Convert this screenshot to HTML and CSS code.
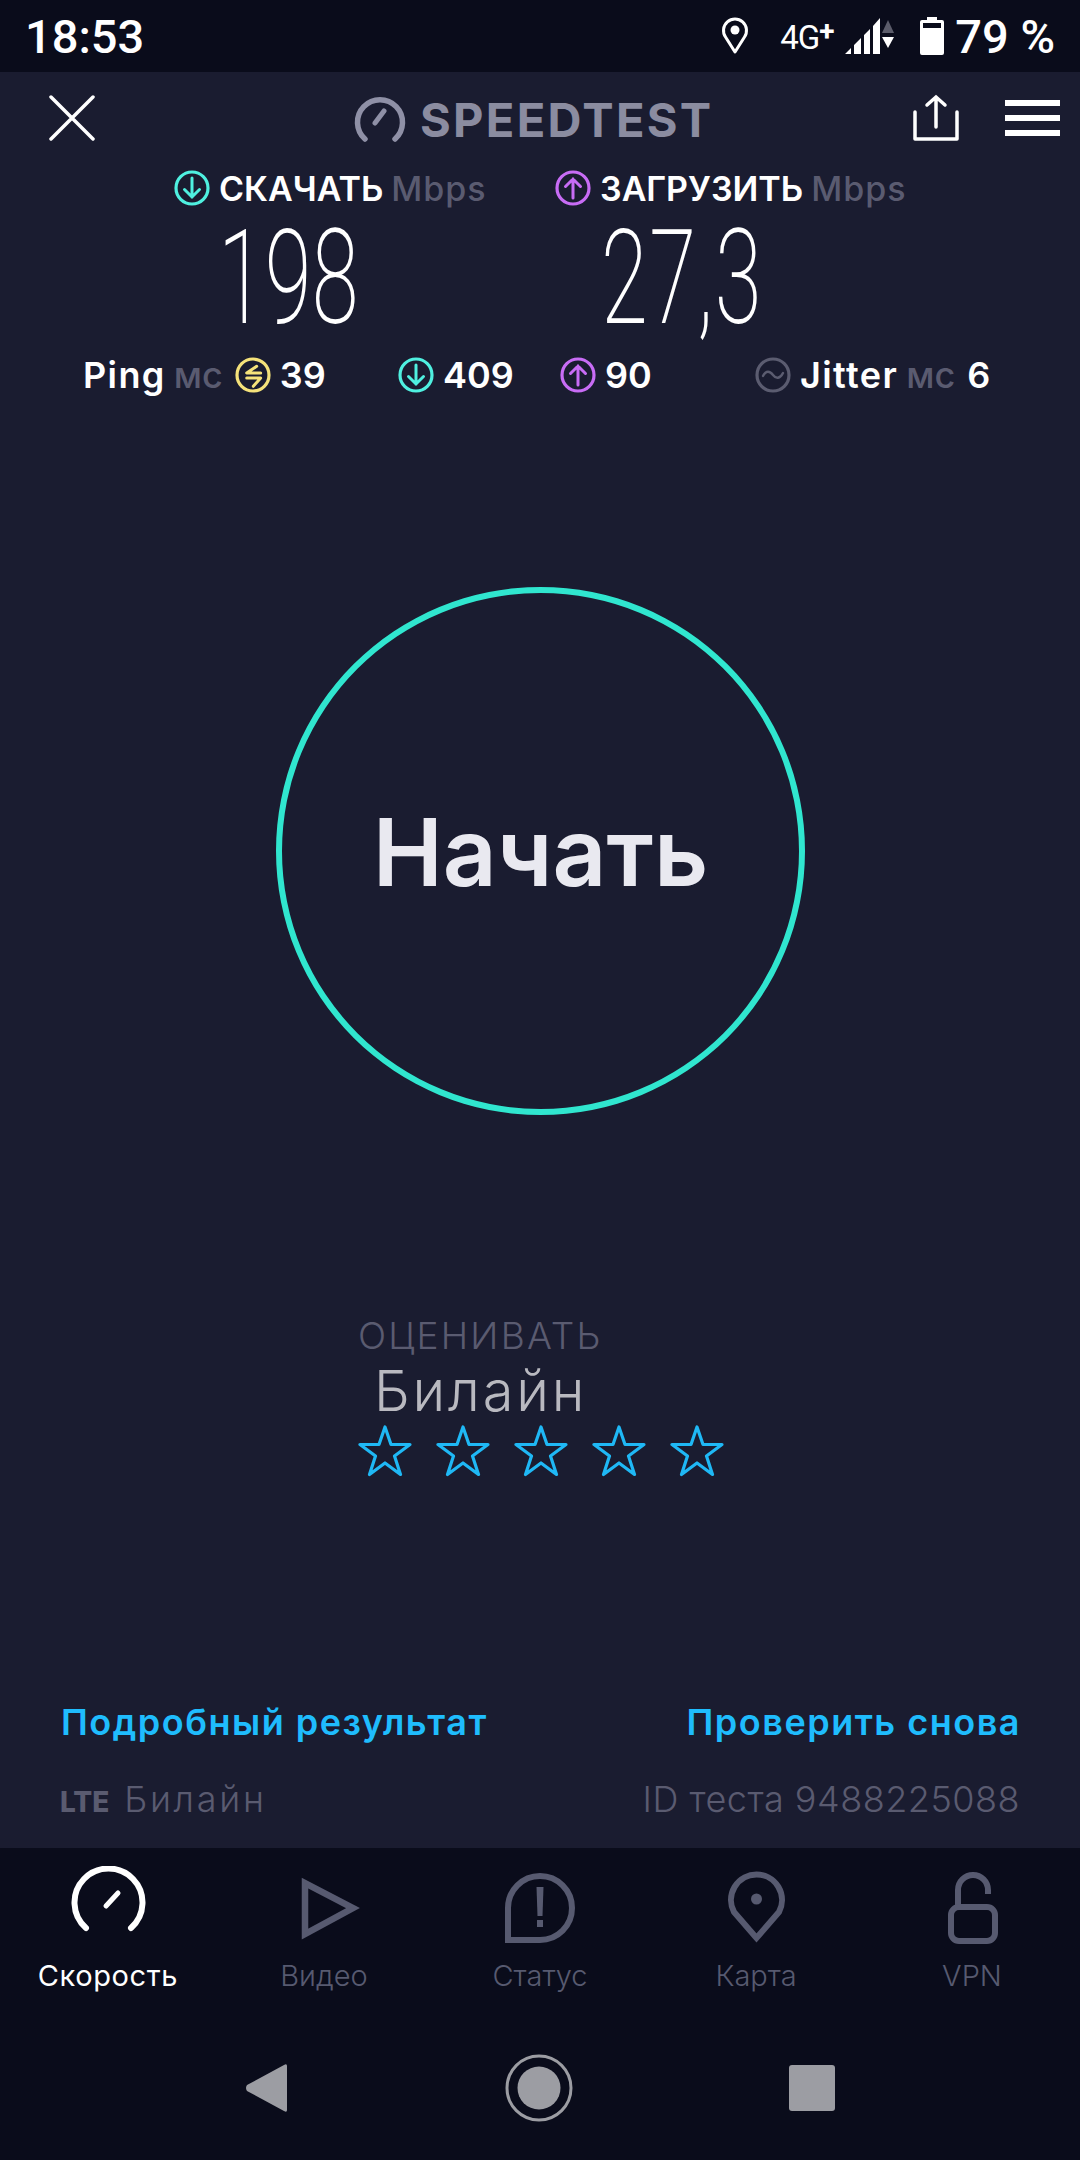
FILE: index.html
```html
<!DOCTYPE html>
<html lang="ru">
<head>
  <meta charset="UTF-8">
  <meta name="viewport" content="width=device-width, initial-scale=1.0">
  <title>Speedtest</title>
  <link rel="stylesheet" href="styles.css">
</head>
<body>
  <div class="phone">
    <div class="status">
      <span class="clock">18:53</span>
      <svg class="st-pin" width="28" height="38" viewBox="0 0 28 38"><path d="M14 35 L4.5 20 A11.5 11.5 0 1 1 23.5 20 Z" fill="none" stroke="#fff" stroke-width="3" stroke-linejoin="round"/><circle cx="14" cy="13" r="4.5" fill="#fff"/></svg>
      <span class="net">4G<span class="plus">+</span></span>
      <svg class="st-signal" width="52" height="38" viewBox="0 0 52 38"><path d="M1 37 L7 31 V37 Z M10 37 V28 L17 21 V37 Z M20 37 V18 L26 12 V37 Z M29 37 V9 L36 1 V37 Z" fill="#fff"/><path d="M38 16 L44 3 L50 16 Z" fill="#5b5c6a"/><path d="M38 20 H50 L44 31 Z" fill="#fff"/></svg>
      <svg class="st-batt" width="24" height="38" viewBox="0 0 24 38"><path d="M7 0 H17 V3 H22 Q24 3 24 5 V36 Q24 38 22 38 H2 Q0 38 0 36 V5 Q0 3 2 3 H7 Z" fill="#fff"/><rect x="3" y="6" width="18" height="5" fill="#0a0c1b"/></svg>
      <span class="pct">79 %</span>
    </div>

    <main class="main">
      <div class="topbar">
        <svg class="close" width="46" height="46" viewBox="0 0 46 46"><path d="M2 2 L44 44 M44 2 L2 44" stroke="#fff" stroke-width="3.5" stroke-linecap="round"/></svg>
        <div class="brand">
          <svg width="56" height="50" viewBox="0 0 56 50"><path d="M13 46 A22.5 22.5 0 1 1 43 46" fill="none" stroke="#8f90a6" stroke-width="5.5" stroke-linecap="round"/><path d="M32 18 L23 30" stroke="#8f90a6" stroke-width="5" stroke-linecap="round"/></svg>
          <span>SPEEDTEST</span>
        </div>
        <svg class="share" width="48" height="48" viewBox="0 0 48 48"><path d="M3 18 V45 H45 V18" fill="none" stroke="#fff" stroke-width="3.5" stroke-linecap="round" stroke-linejoin="round"/><path d="M24 33 V3 M15 11 L24 3 L33 11" fill="none" stroke="#fff" stroke-width="3.5" stroke-linecap="round"/></svg>
        <div class="burger"><i></i><i></i><i></i></div>
      </div>

      <div class="speeds">
        <div class="speed speed-down">
          <div class="speed-label">
            <svg class="ico" viewBox="0 0 36 36"><circle cx="18" cy="18" r="16" fill="none" stroke="#4ff0e0" stroke-width="3.2"/><path d="M18 8 V27 M10.500 19.500 L18 27 L25.500 19.500" fill="none" stroke="#4ff0e0" stroke-width="3" stroke-linecap="round"/></svg>
            <b>СКАЧАТЬ</b><em>Mbps</em>
          </div>
          <div class="big"><span>198</span></div>
        </div>
        <div class="speed speed-up">
          <div class="speed-label">
            <svg class="ico" viewBox="0 0 36 36"><circle cx="18" cy="18" r="16" fill="none" stroke="#c86cf5" stroke-width="3.2"/><path d="M18 28 V9 M10.500 16.500 L18 9 L25.500 16.500" fill="none" stroke="#c86cf5" stroke-width="3" stroke-linecap="round"/></svg>
            <b>ЗАГРУЗИТЬ</b><em>Mbps</em>
          </div>
          <div class="big"><span>27,3</span></div>
        </div>
      </div>

      <div class="minor">
        <div class="m m-ping">
          <b class="word">Ping</b><em>мс</em>
          <svg class="ico" viewBox="0 0 36 36"><circle cx="18" cy="18" r="16" fill="none" stroke="#f5e27a" stroke-width="3.2"/><path d="M21.700 9.300 L11.700 16 H25.700 M11.700 21 H25.700 L18.300 29.300" fill="none" stroke="#f5e27a" stroke-width="3" stroke-linecap="round" stroke-linejoin="round"/></svg>
          <b>39</b>
        </div>
        <div class="m m-down">
          <svg class="ico" viewBox="0 0 36 36"><circle cx="18" cy="18" r="16" fill="none" stroke="#4ff0e0" stroke-width="3.2"/><path d="M18 8 V27 M10.500 19.500 L18 27 L25.500 19.500" fill="none" stroke="#4ff0e0" stroke-width="3" stroke-linecap="round"/></svg>
          <b>409</b>
        </div>
        <div class="m m-up">
          <svg class="ico" viewBox="0 0 36 36"><circle cx="18" cy="18" r="16" fill="none" stroke="#c86cf5" stroke-width="3.2"/><path d="M18 28 V9 M10.500 16.500 L18 9 L25.500 16.500" fill="none" stroke="#c86cf5" stroke-width="3" stroke-linecap="round"/></svg>
          <b>90</b>
        </div>
        <div class="m m-jitter">
          <svg class="ico" viewBox="0 0 36 36"><circle cx="18" cy="18" r="16" fill="none" stroke="#5b5c70" stroke-width="3.2"/><path d="M8 19 C11 13 15 14 18 18 C21 22 25 22 28 16" fill="none" stroke="#5b5c70" stroke-width="2.4" stroke-linecap="round"/></svg>
          <b class="word">Jitter</b><em>мс</em><b class="six">6</b>
        </div>
      </div>

      <div class="start"><span>Начать</span></div>

      <div class="rate">
        <div class="rate-title">ОЦЕНИВАТЬ</div>
        <div class="rate-name">Билайн</div>
        <div class="stars">
          <svg width="54" height="52" viewBox="0 0 54 52"><path d="M27 2 L33 19.500 H52 L36.500 31 L42.500 49.500 L27 38 L11.500 49.500 L17.500 31 L2 19.500 H21 Z" fill="none" stroke="#1fb8f5" stroke-width="3.2" stroke-linejoin="round"/></svg>
          <svg width="54" height="52" viewBox="0 0 54 52"><path d="M27 2 L33 19.500 H52 L36.500 31 L42.500 49.500 L27 38 L11.500 49.500 L17.500 31 L2 19.500 H21 Z" fill="none" stroke="#1fb8f5" stroke-width="3.2" stroke-linejoin="round"/></svg>
          <svg width="54" height="52" viewBox="0 0 54 52"><path d="M27 2 L33 19.500 H52 L36.500 31 L42.500 49.500 L27 38 L11.500 49.500 L17.500 31 L2 19.500 H21 Z" fill="none" stroke="#1fb8f5" stroke-width="3.2" stroke-linejoin="round"/></svg>
          <svg width="54" height="52" viewBox="0 0 54 52"><path d="M27 2 L33 19.500 H52 L36.500 31 L42.500 49.500 L27 38 L11.500 49.500 L17.500 31 L2 19.500 H21 Z" fill="none" stroke="#1fb8f5" stroke-width="3.2" stroke-linejoin="round"/></svg>
          <svg width="54" height="52" viewBox="0 0 54 52"><path d="M27 2 L33 19.500 H52 L36.500 31 L42.500 49.500 L27 38 L11.500 49.500 L17.500 31 L2 19.500 H21 Z" fill="none" stroke="#1fb8f5" stroke-width="3.2" stroke-linejoin="round"/></svg>
        </div>
      </div>

      <div class="links">
        <span>Подробный результат</span>
        <span>Проверить снова</span>
      </div>
      <div class="meta">
        <span class="carrier"><b>LTE</b> Билайн</span>
        <span class="test-id">ID теста 9488225088</span>
      </div>
    </main>

    <nav class="tabs">
      <div class="tab active">
        <svg width="80" height="80" viewBox="0 0 80 80"><path d="M18 62 A34 34 0 1 1 63 62" fill="none" stroke="#fff" stroke-width="6" stroke-linecap="round"/><path d="M50 27 L38 40" stroke="#fff" stroke-width="5" stroke-linecap="round"/></svg>
        <span>Скорость</span>
      </div>
      <div class="tab">
        <svg width="80" height="80" viewBox="0 0 80 80"><path d="M21 17 V68 L69 42 Z" fill="none" stroke="#575a70" stroke-width="6.500"/></svg>
        <span>Видео</span>
      </div>
      <div class="tab">
        <svg width="80" height="80" viewBox="0 0 80 80"><path d="M8 74 V42 A32 32 0 0 1 72 42 A32 32 0 0 1 40 74 Z" fill="none" stroke="#575a70" stroke-width="6"/><path d="M36.500 21 H43.500 L42.500 50 H37.500 Z" fill="#575a70"/><rect x="37" y="54" width="6" height="7" fill="#575a70"/></svg>
        <span>Статус</span>
      </div>
      <div class="tab">
        <svg width="80" height="80" viewBox="0 0 80 80"><path d="M40.500 72 L18 46 A25.500 25.500 0 1 1 63 46 Z" fill="none" stroke="#575a70" stroke-width="6" stroke-linejoin="miter"/><circle cx="40.500" cy="33" r="5.500" fill="#575a70"/></svg>
        <span>Карта</span>
      </div>
      <div class="tab">
        <svg width="80" height="80" viewBox="0 0 80 80"><path d="M26 40 V24 A15 15 0 0 1 56 24 V28" fill="none" stroke="#575a70" stroke-width="6"/><rect x="19" y="41" width="44" height="34" rx="8" fill="none" stroke="#575a70" stroke-width="6"/></svg>
        <span>VPN</span>
      </div>
    </nav>

    <div class="sysnav">
      <svg width="44" height="50" viewBox="0 0 44 50"><path d="M42 3 V47 Q42 50 39 48 L2 28 Q0 25 2 22 L39 2 Q42 0 42 3 Z" fill="#9c9da3"/></svg>
      <svg width="68" height="68" viewBox="0 0 68 68"><circle cx="34" cy="34" r="32" fill="none" stroke="#9c9da3" stroke-width="3"/><circle cx="34" cy="34" r="21.500" fill="#9c9da3"/></svg>
      <div class="sq"></div>
    </div>
  </div>
</body>
</html>
```

FILE: styles.css
```css
* {
  box-sizing: border-box;
}
html, body {
  margin: 0;
  padding: 0;
}
body {
  background-color: #1a1c30;
  font-family: Inter, "Noto Sans", sans-serif;
  color: #fff;
}
.phone {
  width: 1080px;
  height: 2160px;
  display: flex;
  flex-direction: column;
  overflow: hidden;
}

/* status bar */
.status {
  height: 72px;
  flex: none;
  background-color: #0a0c1b;
  display: flex;
  align-items: center;
  padding: 0 25px 0 25px;
  font-family: Roboto, sans-serif;
  font-weight: 500;
}
.clock {
  font-size: 47px;
  margin-right: auto;
}
.st-pin {
  margin-right: 31px;
}
.net {
  font-size: 33px;
  font-weight: 400;
  letter-spacing: -1px;
  width: 64px;
}
.plus {
  font-size: 28px;
  font-weight: 700;
  vertical-align: 8px;
}
.st-signal {
  margin-right: 24px;
}
.pct {
  font-size: 47px;
  margin-left: 11px;
}

/* main area */
.main {
  flex: 1;
  display: flex;
  flex-direction: column;
  background-color: #1a1c30;
}
.topbar {
  height: 92px;
  flex: none;
  display: flex;
  align-items: center;
  padding: 0 20px 0 49px;
}
.brand {
  display: flex;
  align-items: center;
  margin-left: 257px;
  color: #8b8ca0;
  font-size: 47px;
  font-weight: 700;
  letter-spacing: 2.3px;
}
.brand span {
  margin-left: 12px;
  margin-top: 2px;
}
.share {
  margin-left: auto;
}
.burger {
  margin-left: 45px;
  width: 55px;
  display: flex;
  flex-direction: column;
  gap: 9px;
}
.burger i {
  display: block;
  height: 6px;
  background-color: #fff;
}

.speeds {
  display: flex;
  padding-left: 174px;
  padding-top: 2px;
}
.speed-up {
  margin-left: 27px;
}
.speed-label {
  display: flex;
  align-items: center;
  height: 44px;
  font-size: 34px;
}
.speed-label b, .m b {
  font-weight: 600;
  color: #fff;
}
.speed-label em, .m em {
  font-style: normal;
  font-weight: 500;
  color: #5a5b70;
  margin-left: 8px;
}
.speed-label em {
  letter-spacing: 1px;
}
.ico {
  width: 36px;
  height: 36px;
  flex: none;
  margin-right: 9px;
}
.big {
  height: 135px;
  padding-top: 9px;
  font-family: Roboto, sans-serif;
  font-weight: 200;
  font-size: 132px;
  line-height: 119px;
}
.big span {
  display: inline-block;
  transform: scaleX(0.645);
  transform-origin: 0 50%;
}
.speed-down .big {
  padding-left: 44px;
}
.speed-up .big {
  padding-left: 46px;
  letter-spacing: 2px;
}
.speed-down {
  width: 354px;
}

.minor {
  display: flex;
  height: 48px;
  align-items: center;
  padding-left: 83px;
  margin-top: 6px;
  font-size: 36px;
}
.m {
  display: flex;
  align-items: center;
}
.word {
  letter-spacing: 1.4px;
}
.m-ping {
  width: 315px;
}
.m-ping .ico {
  margin-left: 12px;
}
.m-down {
  width: 162px;
}
.m-up {
  width: 195px;
}
.six {
  margin-left: 12px;
}

.start {
  width: 529px;
  height: 528px;
  flex: none;
  margin: 188px 0 0 276px;
  padding-top: 2px;
  border: 6px solid #30e6cf;
  border-radius: 50%;
  display: flex;
  align-items: center;
  justify-content: center;
  font-size: 94px;
  font-weight: 600;
  color: #e9e9f0;
}

.rate {
  margin: 199px 0 0 358px;
}
.rate-title {
  font-size: 37px;
  font-weight: 300;
  line-height: 44px;
  letter-spacing: 2.2px;
  color: #5a5b70;
}
.rate-name {
  font-size: 56px;
  font-weight: 300;
  line-height: 66px;
  letter-spacing: 2.8px;
  margin-left: 16px;
  color: #b9b9c0;
}
.stars {
  display: flex;
  gap: 24px;
  margin-top: 1px;
}

.links {
  display: flex;
  justify-content: space-between;
  padding: 0 59px 0 61px;
  margin-top: 223px;
  font-size: 36px;
  font-weight: 600;
  letter-spacing: 1.5px;
  color: #1fbcfd;
}
.meta {
  display: flex;
  justify-content: space-between;
  padding: 0 60px 0 60px;
  margin-top: 33px;
  font-size: 36px;
  font-weight: 300;
  color: #5a5b70;
}
.carrier {
  letter-spacing: 2.7px;
}
.carrier b {
  font-weight: 800;
  font-size: 28px;
  letter-spacing: 0;
  margin-right: 2px;
}
.test-id {
  letter-spacing: 0.5px;
}

/* bottom tabs */
.tabs {
  height: 176px;
  flex: none;
  display: flex;
  background-color: #0a0c1b;
  padding-top: 18px;
}
.tab {
  width: 216px;
  display: flex;
  flex-direction: column;
  align-items: center;
  font-size: 29px;
  font-weight: 300;
  color: #575a70;
}
.tab span {
  margin-top: 12px;
}
.tab.active {
  color: #fff;
  font-weight: 400;
  letter-spacing: 0.6px;
}

.sysnav {
  height: 136px;
  flex: none;
  background-color: #0a0c1b;
  display: flex;
  align-items: center;
  justify-content: center;
  padding-bottom: 8px;
  gap: 216px;
}
.sq {
  width: 46px;
  height: 46px;
  border-radius: 3px;
  background-color: #9c9da3;
}
```
